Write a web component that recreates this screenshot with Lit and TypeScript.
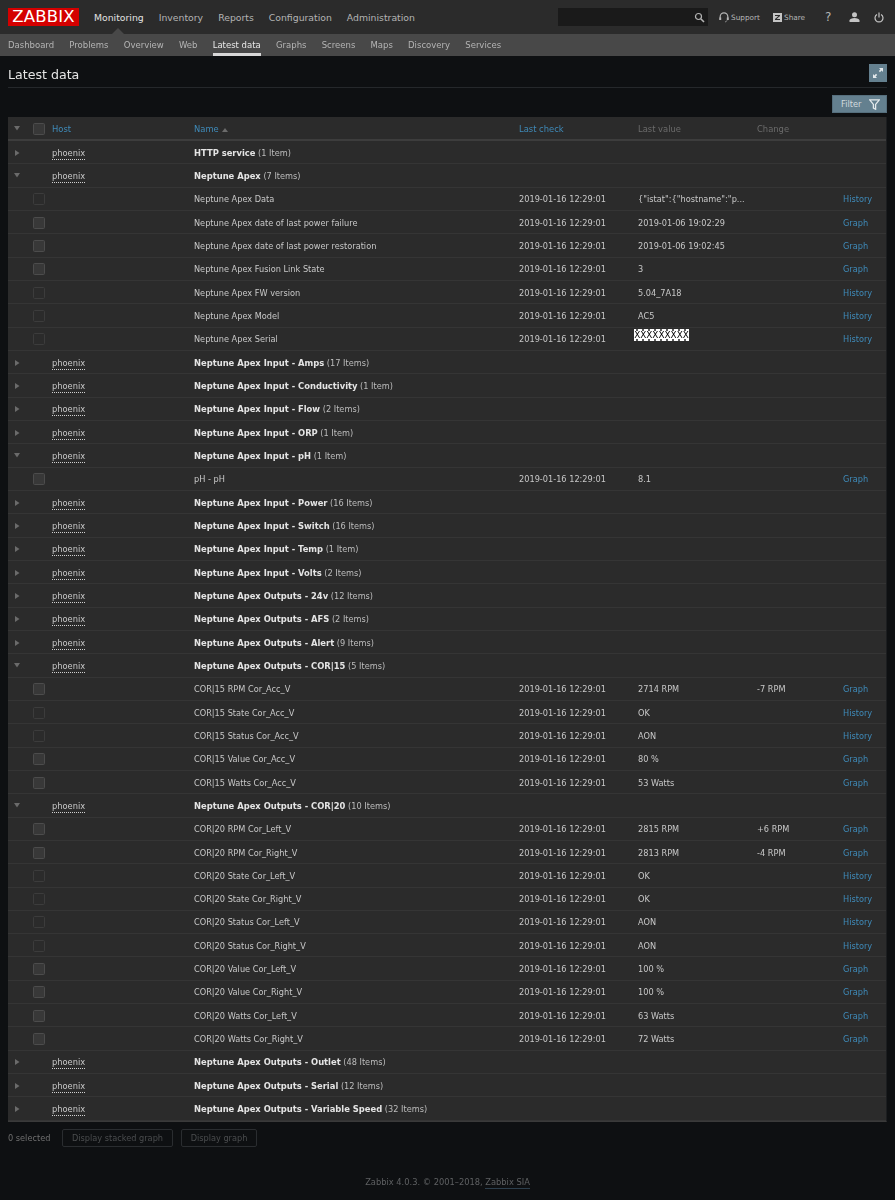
import { LitElement, html, css, svg } from "lit";
import { customElement } from "lit/decorators.js";

type Row =
  | { kind: "group"; name: string; count: string; open?: boolean }
  | { kind: "item"; name: string; value: string; change?: string; link: "Graph" | "History"; mark?: boolean };

const g = (name: string, count: string, open = false): Row => ({ kind: "group", name, count, open });
const i = (name: string, value: string, link: "Graph" | "History", change = "", mark = false): Row => ({ kind: "item", name, value, link, change, mark });

const rows: Row[] = [
  g("HTTP service", "(1 Item)"),
  g("Neptune Apex", "(7 Items)", true),
  i("Neptune Apex Data", '{"istat":{"hostname":"p...', "History"),
  i("Neptune Apex date of last power failure", "2019-01-06 19:02:29", "Graph"),
  i("Neptune Apex date of last power restoration", "2019-01-06 19:02:45", "Graph"),
  i("Neptune Apex Fusion Link State", "3", "Graph"),
  i("Neptune Apex FW version", "5.04_7A18", "History"),
  i("Neptune Apex Model", "AC5", "History"),
  i("Neptune Apex Serial", "XXXXXXXXX", "History", "", true),
  g("Neptune Apex Input - Amps", "(17 Items)"),
  g("Neptune Apex Input - Conductivity", "(1 Item)"),
  g("Neptune Apex Input - Flow", "(2 Items)"),
  g("Neptune Apex Input - ORP", "(1 Item)"),
  g("Neptune Apex Input - pH", "(1 Item)", true),
  i("pH - pH", "8.1", "Graph"),
  g("Neptune Apex Input - Power", "(16 Items)"),
  g("Neptune Apex Input - Switch", "(16 Items)"),
  g("Neptune Apex Input - Temp", "(1 Item)"),
  g("Neptune Apex Input - Volts", "(2 Items)"),
  g("Neptune Apex Outputs - 24v", "(12 Items)"),
  g("Neptune Apex Outputs - AFS", "(2 Items)"),
  g("Neptune Apex Outputs - Alert", "(9 Items)"),
  g("Neptune Apex Outputs - COR|15", "(5 Items)", true),
  i("COR|15 RPM Cor_Acc_V", "2714 RPM", "Graph", "-7 RPM"),
  i("COR|15 State Cor_Acc_V", "OK", "History"),
  i("COR|15 Status Cor_Acc_V", "AON", "History"),
  i("COR|15 Value Cor_Acc_V", "80 %", "Graph"),
  i("COR|15 Watts Cor_Acc_V", "53 Watts", "Graph"),
  g("Neptune Apex Outputs - COR|20", "(10 Items)", true),
  i("COR|20 RPM Cor_Left_V", "2815 RPM", "Graph", "+6 RPM"),
  i("COR|20 RPM Cor_Right_V", "2813 RPM", "Graph", "-4 RPM"),
  i("COR|20 State Cor_Left_V", "OK", "History"),
  i("COR|20 State Cor_Right_V", "OK", "History"),
  i("COR|20 Status Cor_Left_V", "AON", "History"),
  i("COR|20 Status Cor_Right_V", "AON", "History"),
  i("COR|20 Value Cor_Left_V", "100 %", "Graph"),
  i("COR|20 Value Cor_Right_V", "100 %", "Graph"),
  i("COR|20 Watts Cor_Left_V", "63 Watts", "Graph"),
  i("COR|20 Watts Cor_Right_V", "72 Watts", "Graph"),
  g("Neptune Apex Outputs - Outlet", "(48 Items)"),
  g("Neptune Apex Outputs - Serial", "(12 Items)"),
  g("Neptune Apex Outputs - Variable Speed", "(32 Items)"),
];

const main = ["Monitoring", "Inventory", "Reports", "Configuration", "Administration"];
const sub = ["Dashboard", "Problems", "Overview", "Web", "Latest data", "Graphs", "Screens", "Maps", "Discovery", "Services"];

const arrowRight = svg`<svg class="arrow" width="8" height="8" viewBox="0 0 8 8"><path d="M2 1l4.5 3L2 7z" fill="#6b6b6b"/></svg>`;
const arrowDown = svg`<svg class="arrow" width="8" height="8" viewBox="0 0 8 8"><path d="M1 1h6L4 5.5z" fill="#6b6b6b"/></svg>`;

@customElement("app-root")
export class AppRoot extends LitElement {
  static styles = css`
    :host {
      display: block;
      width: 895px;
      height: 1200px;
      background: #0e1012;
      color: #dcdcdc;
      font-family: "DejaVu Sans", sans-serif;
      font-size: 8.2px;
      overflow: hidden;
    }
    .shell { filter: blur(0.3px); height: 1200px; }
    .top {
      height: 34px;
      background: #2b2b2b;
      display: flex;
      align-items: center;
      padding: 0 0 0 8px;
      box-sizing: border-box;
      position: relative;
    }
    .logo {
      width: 71px;
      height: 18px;
      background: #d40000;
      color: #fff;
      font-size: 16.5px;
      line-height: 18px;
      text-align: center;
      letter-spacing: 0.2px;
      margin-right: 15px;
      flex: none;
    }
    .main { display: flex; gap: 15px; font-size: 9.3px; color: #b4b4b4; }
    .main .on { color: #e2e2e2; }
    .caret {
      position: absolute;
      left: 112px;
      bottom: 0;
      width: 0;
      height: 0;
      border-left: 6px solid transparent;
      border-right: 6px solid transparent;
      border-bottom: 6px solid #484848;
    }
    .search {
      margin-left: auto;
      width: 150px;
      height: 18px;
      background: #1a1a1a;
      display: flex;
      align-items: center;
      justify-content: flex-end;
      padding-right: 3px;
      box-sizing: border-box;
      flex: none;
    }
    .tools { display: flex; align-items: center; margin-left: 11px; color: #b4b4b4; font-size: 7.3px; width: 176px; flex: none; }
    .tool { display: flex; align-items: center; gap: 2px; flex: none; }
    .tool.support { width: 54px; }
    .tool.share { width: 51px; }
    .tool.q { width: 25px; font-size: 12px; padding-left: 1px; box-sizing: border-box; }
    .tool.user { width: 25px; }
    .sub {
      height: 22px;
      background: #484848;
      display: flex;
      padding: 0 8px;
      box-sizing: border-box;
      gap: 15.2px;
      font-size: 8.5px;
      color: #b4b4b4;
      line-height: 22px;
    }
    .sub span { height: 22px; box-sizing: border-box; }
    .sub .on { color: #e8e8e8; border-bottom: 3px solid #d8d8d8; }
    .page { padding: 0 8px; }
    .head {
      height: 32px;
      display: flex;
      align-items: center;
      justify-content: space-between;
      border-bottom: 1px solid #25282b;
      box-sizing: border-box;
      padding-top: 5px;
    }
    h1 { margin: 0; font-size: 12.6px; font-weight: 400; color: #e6e6e6; }
    .btn-expand {
      width: 18px;
      height: 18px;
      background: #64808f;
      display: flex;
      align-items: center;
      justify-content: center;
      margin-top: -3px;
    }
    .filter-row { display: flex; justify-content: flex-end; padding-top: 7px; height: 29px; box-sizing: border-box; }
    .btn-filter {
      width: 55px;
      height: 18px;
      background: #64808f;
      border: 1px solid #566f7d;
      box-sizing: border-box;
      display: flex;
      align-items: center;
      justify-content: space-between;
      padding: 0 6px 0 8px;
      color: #d2dade;
      font-size: 8.25px;
    }
    .table { background: #2b2b2b; border-bottom: 1px solid #3a3a3a; border-right: 1px solid #1c1e20; }
    .row {
      height: 23.34px;
      box-sizing: border-box;
      padding-top: 1px;
      display: grid;
      grid-template-columns: 25px 19px 142px 325px 119px 119px 86px 1fr;
      align-items: center;
      border-bottom: 1px solid #353535;
      white-space: nowrap;
    }
    .row.hdr { height: 24px; border-bottom: 2px solid #3d3d3d; color: #6b6b6b; font-size: 8.4px; }
    .row.hdr .cell-a { color: #3f8bba; }
    .cell-arrow { padding-left: 5px; display: flex; align-items: center; }
    .arrow { display: block; }
    .box {
      width: 12px;
      height: 12px;
      box-sizing: border-box;
      border: 1px solid #3c3c3c;
      background: #2b2b2b;
      border-radius: 1.5px;
    }
    .box.fill { background: #383838; border-color: #4c4c4c; }
    .host { color: #c8c8c8; font-size: 8.3px; }
    .host span { border-bottom: 1px dotted #d0d0d0; padding-bottom: 1px; }
    .row b { font-weight: 700; color: #e4e4e4; font-size: 8.4px; }
    .cnt { color: #bdbdbd; }
    .dim { color: #c8c8c8; }
    .lnk { color: #3f8bba; }
    .mark {
      display: inline-block;
      background-color: #fff;
      background-image:
        radial-gradient(circle at 50% 50%, #000 0.6px, transparent 0.9px),
        radial-gradient(circle at 50% 50%, #000 0.6px, transparent 0.9px);
      background-size: 6px 2px, 6px 2px;
      background-position: 0 0, 0 100%;
      background-repeat: repeat-x;
      color: #000;
      margin-left: -4px;
      width: 55px;
      height: 12px;
      line-height: 12px;
      box-sizing: border-box;
      text-align: center;
      font-size: 8.9px;
      position: relative;
      top: -3px;
      overflow: hidden;
    }
    .sort { display: inline-block; width: 0; height: 0; margin-left: 3px; border-left: 3px solid transparent; border-right: 3px solid transparent; border-bottom: 4px solid #6b6b6b; }
    .actions { display: flex; align-items: center; height: 30px; color: #6f6f6f; margin-top: 1px; }
    .actions .sel { width: 54px; }
    .actions .b {
      height: 18px;
      box-sizing: border-box;
      border: 1px solid #2a2d30;
      border-radius: 2px;
      color: #4b4d4f;
      display: flex;
      align-items: center;
      justify-content: center;
    }
    .actions .b1 { width: 111px; margin-right: 8px; }
    .actions .b2 { width: 76px; }
    .foot { text-align: center; color: #5e6062; margin-top: 24px; font-size: 8.3px; }
    .foot a { border-bottom: 1px solid #2c3e4c; padding-bottom: 1px; }
  `;

  private box(fill: boolean) {
    return html`<div class="box ${fill ? "fill" : ""}"></div>`;
  }

  private renderRow(r: Row) {
    if (r.kind === "group") {
      return html`<div class="row">
        <div class="cell-arrow">${r.open ? arrowDown : arrowRight}</div>
        <div></div>
        <div class="host"><span>phoenix</span></div>
        <div><b>${r.name}</b> <span class="cnt">${r.count}</span></div>
        <div></div><div></div><div></div><div></div>
      </div>`;
    }
    return html`<div class="row">
      <div></div>
      <div>${this.box(r.link === "Graph")}</div>
      <div></div>
      <div class="dim">${r.name}</div>
      <div class="dim">2019-01-16 12:29:01</div>
      <div class="dim">${r.mark ? html`<span class="mark">${r.value}</span>` : r.value}</div>
      <div class="dim">${r.change}</div>
      <div class="lnk">${r.link}</div>
    </div>`;
  }

  render() {
    return html`
      <div class="shell">
      <div class="top">
        <div class="logo">ZABBIX</div>
        <div class="main">${main.map((m, n) => html`<span class=${n === 0 ? "on" : ""}>${m}</span>`)}</div>
        <div class="caret"></div>
        <div class="search">
          <svg width="11" height="11" viewBox="0 0 11 11" fill="none" stroke="#b4b4b4"><circle cx="4.5" cy="4.5" r="3" stroke-width="1.2"/><path d="M7 7l3 3" stroke-width="1.6"/></svg>
        </div>
        <div class="tools">
          <div class="tool support">
            <svg width="10" height="11" viewBox="0 0 10 11" fill="none" stroke="#b4b4b4" stroke-width="1.2"><path d="M1.2 6V4.6a3.8 3.8 0 0 1 7.6 0V6"/><path d="M1.2 5.5v2.4M8.8 5.5v2.4" stroke-width="2"/><path d="M8 8.5c-.5 1-1.2 1.3-2 1.3" stroke-width=".8"/></svg>
            <span>Support</span>
          </div>
          <div class="tool share">
            <svg width="9" height="9" viewBox="0 0 9 9"><rect width="9" height="9" fill="#c4c4c4"/><path d="M2 2h5v1L3.6 6H7v1H2V6l3.4-3H2z" fill="#2b2b2b"/></svg>
            <span>Share</span>
          </div>
          <div class="tool q">?</div>
          <div class="tool user">
            <svg width="11" height="10" viewBox="0 0 11 10" fill="#c4c4c4"><circle cx="5.5" cy="2.7" r="2.5"/><path d="M.5 10V8.5C.5 7 3 6 5.5 6s5 1 5 2.5V10z"/></svg>
          </div>
          <div class="tool power">
            <svg width="10" height="11" viewBox="0 0 10 11" fill="none" stroke="#c4c4c4" stroke-width="1.2"><path d="M3 2.5a4 4 0 1 0 4 0"/><path d="M5 .5v5"/></svg>
          </div>
        </div>
      </div>
      <div class="sub">${sub.map((s) => html`<span class=${s === "Latest data" ? "on" : ""}>${s}</span>`)}</div>
      <div class="page">
        <div class="head">
          <h1>Latest data</h1>
          <div class="btn-expand">
            <svg width="12" height="12" viewBox="0 0 12 12" fill="#e4e9ec"><path d="M7 1h4v4L9.6 3.6 8 5.2 6.8 4 8.4 2.4zM5 11H1V7l1.4 1.4L4 6.8 5.2 8 3.6 9.6z"/></svg>
          </div>
        </div>
        <div class="filter-row">
          <div class="btn-filter">
            <span>Filter</span>
            <svg width="11" height="11" viewBox="0 0 11 11" fill="none" stroke="#e4e9ec" stroke-width="1.3"><path d="M.7.8h9.6L6.6 5.4v4.8L4.4 9V5.4z"/></svg>
          </div>
        </div>
        <div class="table">
          <div class="row hdr">
            <div class="cell-arrow">${arrowDown}</div>
            <div>${this.box(true)}</div>
            <div class="cell-a">Host</div>
            <div class="cell-a">Name<i class="sort"></i></div>
            <div class="cell-a">Last check</div>
            <div>Last value</div>
            <div>Change</div>
            <div></div>
          </div>
          ${rows.map((r) => this.renderRow(r))}
        </div>
        <div class="actions">
          <div class="sel">0 selected</div>
          <div class="b b1">Display stacked graph</div>
          <div class="b b2">Display graph</div>
        </div>
        <div class="foot">Zabbix 4.0.3. © 2001–2018, <a>Zabbix SIA</a></div>
      </div>
      </div>
    `;
  }
}
